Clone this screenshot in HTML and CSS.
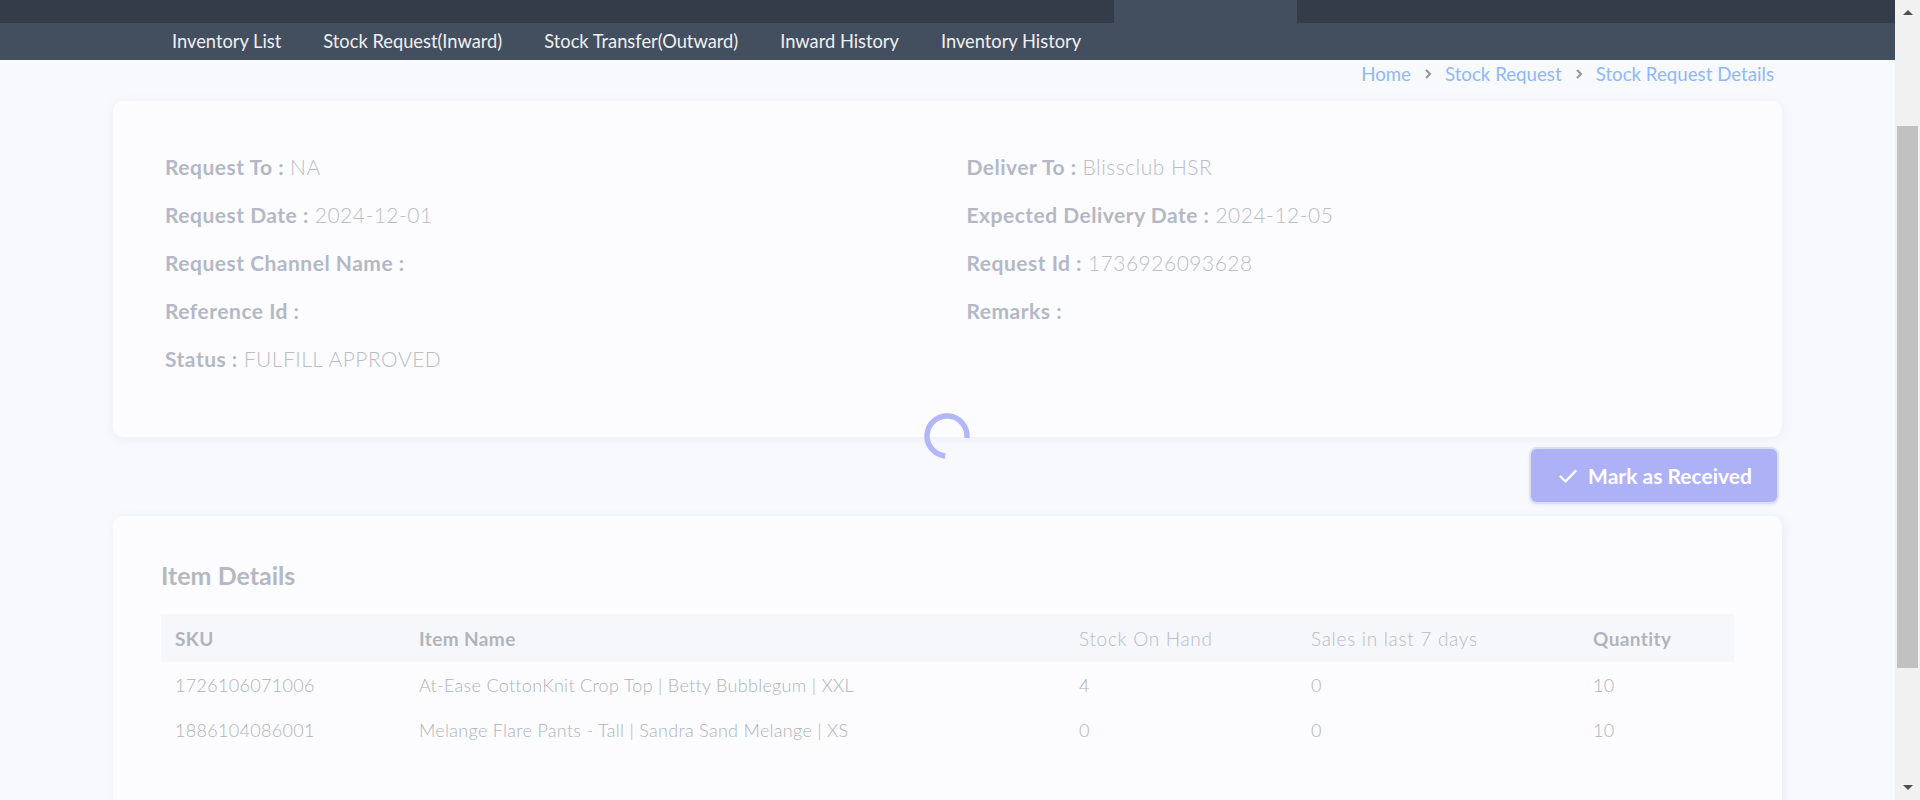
FILE: index.html
```html
<!DOCTYPE html>
<html lang="en">
<head>
<meta charset="utf-8">
<title>Stock Request Details</title>
<link rel="stylesheet" href="styles.css">
</head>
<body>
<div class="window">
  <div class="page">
    <div class="topbar">
      <div class="topbar-tab"></div>
    </div>
    <nav class="nav">
      <a class="nav-item">Inventory List</a>
      <a class="nav-item">Stock Request(Inward)</a>
      <a class="nav-item">Stock Transfer(Outward)</a>
      <a class="nav-item">Inward History</a>
      <a class="nav-item">Inventory History</a>
    </nav>
    <main class="content">
      <div class="breadcrumb">
        <a class="crumb">Home</a>
        <svg class="chev" viewBox="0 0 8 12" width="8" height="12"><path d="M2 2l4 4-4 4" fill="none" stroke="#8f939b" stroke-width="2"/></svg>
        <a class="crumb">Stock Request</a>
        <svg class="chev" viewBox="0 0 8 12" width="8" height="12"><path d="M2 2l4 4-4 4" fill="none" stroke="#8f939b" stroke-width="2"/></svg>
        <a class="crumb">Stock Request Details</a>
      </div>

      <section class="card info-card">
        <div class="info-col">
          <div class="info-row"><span class="lbl">Request To :</span> <span class="val">NA</span></div>
          <div class="info-row"><span class="lbl">Request Date :</span> <span class="val">2024-12-01</span></div>
          <div class="info-row"><span class="lbl">Request Channel Name :</span></div>
          <div class="info-row"><span class="lbl">Reference Id :</span></div>
          <div class="info-row"><span class="lbl">Status :</span> <span class="val">FULFILL APPROVED</span></div>
        </div>
        <div class="info-col">
          <div class="info-row"><span class="lbl">Deliver To :</span> <span class="val">Blissclub HSR</span></div>
          <div class="info-row"><span class="lbl">Expected Delivery Date :</span> <span class="val">2024-12-05</span></div>
          <div class="info-row"><span class="lbl">Request Id :</span> <span class="val">1736926093628</span></div>
          <div class="info-row"><span class="lbl">Remarks :</span></div>
        </div>
      </section>

      <div class="actions">
        <button class="btn-received">
          <svg viewBox="0 0 20 20" width="20" height="20"><path d="M2.5 10.5l5 5L17.5 5" fill="none" stroke="#ffffff" stroke-width="2.4" stroke-linecap="round" stroke-linejoin="round"/></svg>
          <span>Mark as Received</span>
        </button>
      </div>

      <section class="card items-card">
        <h2 class="items-title">Item Details</h2>
        <table class="items">
          <colgroup>
            <col class="c-sku"><col class="c-name"><col class="c-stock"><col class="c-sales"><col class="c-qty">
          </colgroup>
          <thead>
            <tr>
              <th class="strong">SKU</th>
              <th class="strong">Item Name</th>
              <th class="light">Stock On Hand</th>
              <th class="light">Sales in last 7 days</th>
              <th class="strong">Quantity</th>
            </tr>
          </thead>
          <tbody>
            <tr>
              <td>1726106071006</td>
              <td>At-Ease CottonKnit Crop Top | Betty Bubblegum | XXL</td>
              <td>4</td>
              <td>0</td>
              <td>10</td>
            </tr>
            <tr>
              <td>1886104086001</td>
              <td>Melange Flare Pants - Tall | Sandra Sand Melange | XS</td>
              <td>0</td>
              <td>0</td>
              <td>10</td>
            </tr>
          </tbody>
        </table>
      </section>
    </main>
    <div class="spinner">
      <svg viewBox="0 0 50 50" width="50" height="50"><circle cx="25" cy="25" r="20" fill="none" stroke="#b3b6f7" stroke-width="5.5" stroke-dasharray="94 200" transform="rotate(95 25 25)"/></svg>
    </div>
  </div>
  <div class="scrollbar">
    <div class="sb-arrow sb-up"></div>
    <div class="sb-track"><div class="sb-thumb"></div></div>
    <div class="sb-arrow sb-down"></div>
  </div>
</div>
</body>
</html>
```

FILE: styles.css
```css
* { box-sizing: border-box; }
html, body { margin: 0; padding: 0; }
body {
  font-family: Lato, "Noto Sans", "Liberation Sans", sans-serif;
  background: #f8f9fd;
  overflow: hidden;
}
.window {
  display: flex;
  width: 1920px;
  height: 800px;
  overflow: hidden;
}
.page {
  position: relative;
  flex: 1;
  background: #f8f9fd;
  overflow: hidden;
}
.topbar {
  height: 23px;
  background: #343b49;
  padding-left: 1114px;
}
.topbar-tab {
  width: 183px;
  height: 23px;
  background: #434e5f;
}
.nav {
  height: 37px;
  background: #434e5f;
  display: flex;
  align-items: center;
  padding-left: 151px;
  padding-bottom: 1px;
}
.nav-item {
  color: #eef0f3;
  font-size: 18.3px;
  padding: 0 21px;
  white-space: nowrap;
}
.content {
  width: 1669px;
  margin: 0 auto;
}
.breadcrumb {
  height: 28px;
  display: flex;
  align-items: center;
  justify-content: flex-end;
  gap: 13px;
  padding-right: 8px;
  margin-bottom: 13px;
}
.crumb {
  color: #8fb8f6;
  font-size: 18.7px;
}
.chev { display: block; }
.card {
  background: #fcfcfe;
  border-radius: 10px;
  box-shadow: 0 2px 10px rgba(200, 205, 235, 0.25);
}
.info-card {
  height: 336px;
  display: flex;
  padding: 54px 52px 0;
  gap: 38px;
}
.info-col {
  flex: 1;
  display: flex;
  flex-direction: column;
  gap: 24px;
}
.info-row {
  height: 24px;
  line-height: 24px;
  font-size: 21px;
  letter-spacing: 0.5px;
  white-space: nowrap;
}
.lbl {
  font-weight: 700;
  color: #b3b8c5;
}
.val {
  font-weight: 300;
  color: #b9bdc8;
}
.actions {
  display: flex;
  justify-content: flex-end;
  padding: 12px 5px 14px 0;
}
.btn-received {
  width: 246px;
  height: 53px;
  border: none;
  border-radius: 6px;
  background: #adb1f6;
  box-shadow: 0 0 0 2px #dcdef4, 0 2px 4px rgba(150, 155, 220, 0.25);
  display: flex;
  align-items: center;
  justify-content: center;
  gap: 10px;
  color: #ffffff;
  font-family: inherit;
  font-size: 21px;
  font-weight: 700;
  padding: 0 0 0 2px;
}
.btn-received svg { display: block; }
.items-card {
  height: 320px;
  padding: 44px 48px 0;
  box-shadow: 2px 2px 10px rgba(200, 205, 240, 0.35);
}
.items-title {
  margin: 0 0 24px;
  height: 30px;
  line-height: 30px;
  font-size: 25px;
  font-weight: 700;
  color: #b3b8c2;
}
.items {
  width: 100%;
  border-collapse: collapse;
  table-layout: fixed;
}
.c-sku { width: 244px; }
.c-name { width: 660px; }
.c-stock { width: 232px; }
.c-sales { width: 282px; }
.items th {
  height: 48px;
  background: #f6f7fb;
  text-align: left;
  padding: 0 0 0 14px;
  font-size: 19px;
  letter-spacing: 0.4px;
  white-space: nowrap;
}
.items th.strong { font-weight: 700; color: #b0b4bc; }
.items th.light { font-weight: 300; color: #b8bbc2; letter-spacing: 0.7px; }
.items td {
  height: 45px;
  padding: 0 0 0 14px;
  font-size: 18px;
  letter-spacing: 0.3px;
  font-weight: 300;
  color: #aeb2b9;
  white-space: nowrap;
}
.spinner {
  position: absolute;
  left: 922px;
  top: 411px;
  width: 50px;
  height: 50px;
}
.spinner svg { display: block; }
.scrollbar {
  width: 25px;
  height: 800px;
  background: #f1f1f1;
  display: flex;
  flex-direction: column;
  align-items: center;
}
.sb-arrow {
  height: 25px;
  width: 25px;
  display: flex;
  align-items: center;
  justify-content: center;
}
.sb-up::before {
  content: "";
  border-left: 5px solid transparent;
  border-right: 5px solid transparent;
  border-bottom: 5px solid #505050;
}
.sb-down::before {
  content: "";
  border-left: 5px solid transparent;
  border-right: 5px solid transparent;
  border-top: 5px solid #505050;
}
.sb-track {
  flex: 1;
  width: 25px;
  padding: 101px 2px 0;
}
.sb-thumb {
  width: 21px;
  height: 542px;
  background: #c1c1c1;
}
```
